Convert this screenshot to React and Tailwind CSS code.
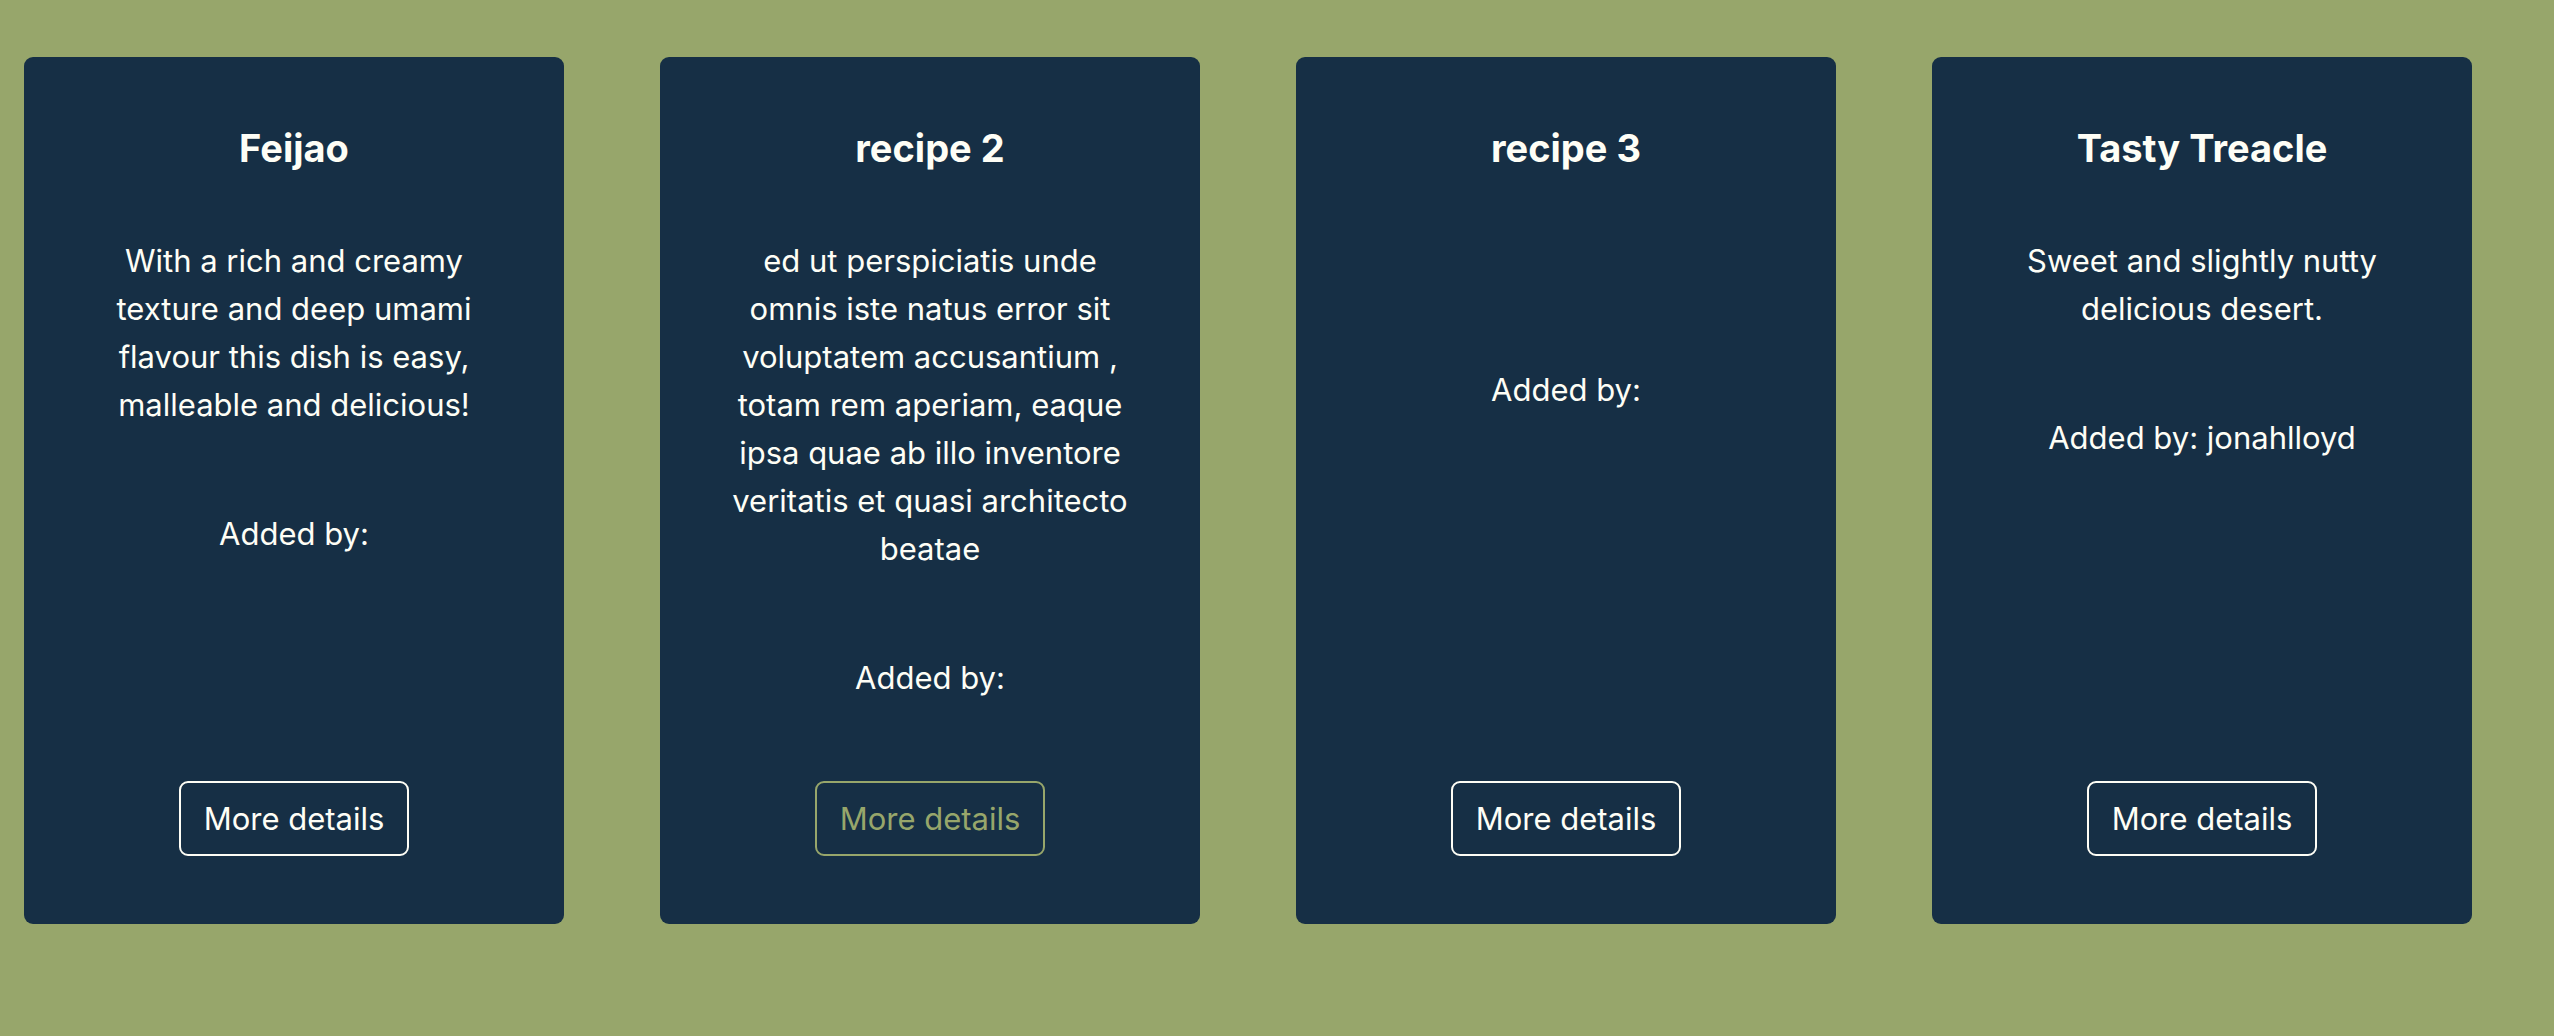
const RECIPES = [
  {
    id: 1,
    title: 'Feijao',
    description: 'With a rich and creamy texture and deep umami flavour this dish is easy, malleable and delicious!',
    addedBy: '',
  },
  {
    id: 2,
    title: 'recipe 2',
    description:
      'ed ut perspiciatis unde omnis iste natus error sit voluptatem accusantium , totam rem aperiam, eaque ipsa quae ab illo inventore veritatis et quasi architecto beatae',
    addedBy: '',
    hovered: true,
  },
  { id: 3, title: 'recipe 3', description: '', addedBy: '' },
  {
    id: 4,
    title: 'Tasty Treacle',
    description: 'Sweet and slightly nutty delicious desert.',
    addedBy: 'jonahlloyd',
  },
]

function RecipeCard({ recipe }) {
  return (
    <div className="w-[540px] h-[867px] shrink-0 bg-[#162f45] rounded-[9px] flex flex-col items-center text-center text-[#fefef6] px-[64px] pt-[68px]">
      <h3 className="text-[38px] leading-[46px] font-bold">{recipe.title}</h3>
      <p className="mt-[66px] text-[31px] leading-[48px]">{recipe.description || '\u00a0'}</p>
      <p className="mt-[81px] text-[31px] leading-[48px]">
        Added by:{recipe.addedBy ? ` ${recipe.addedBy}` : ''}
      </p>
      <button
        className={`mt-auto mb-[68px] h-[75px] px-[23px] rounded-[9px] border-2 bg-transparent text-[31px] leading-[48px] ${
          recipe.hovered ? 'border-[#97a66b] text-[#97a66b]' : 'border-[#fefef6] text-[#fefef6]'
        }`}
      >
        More details
      </button>
    </div>
  )
}

export default function App() {
  return (
    <div
      className="min-h-screen h-[1036px] bg-[#97a66b] flex items-start gap-[96px] pl-[24px] pt-[57px]"
      style={{ fontFamily: 'Inter, "Noto Sans", sans-serif' }}
    >
      {RECIPES.map((r) => (
        <RecipeCard key={r.id} recipe={r} />
      ))}
    </div>
  )
}
